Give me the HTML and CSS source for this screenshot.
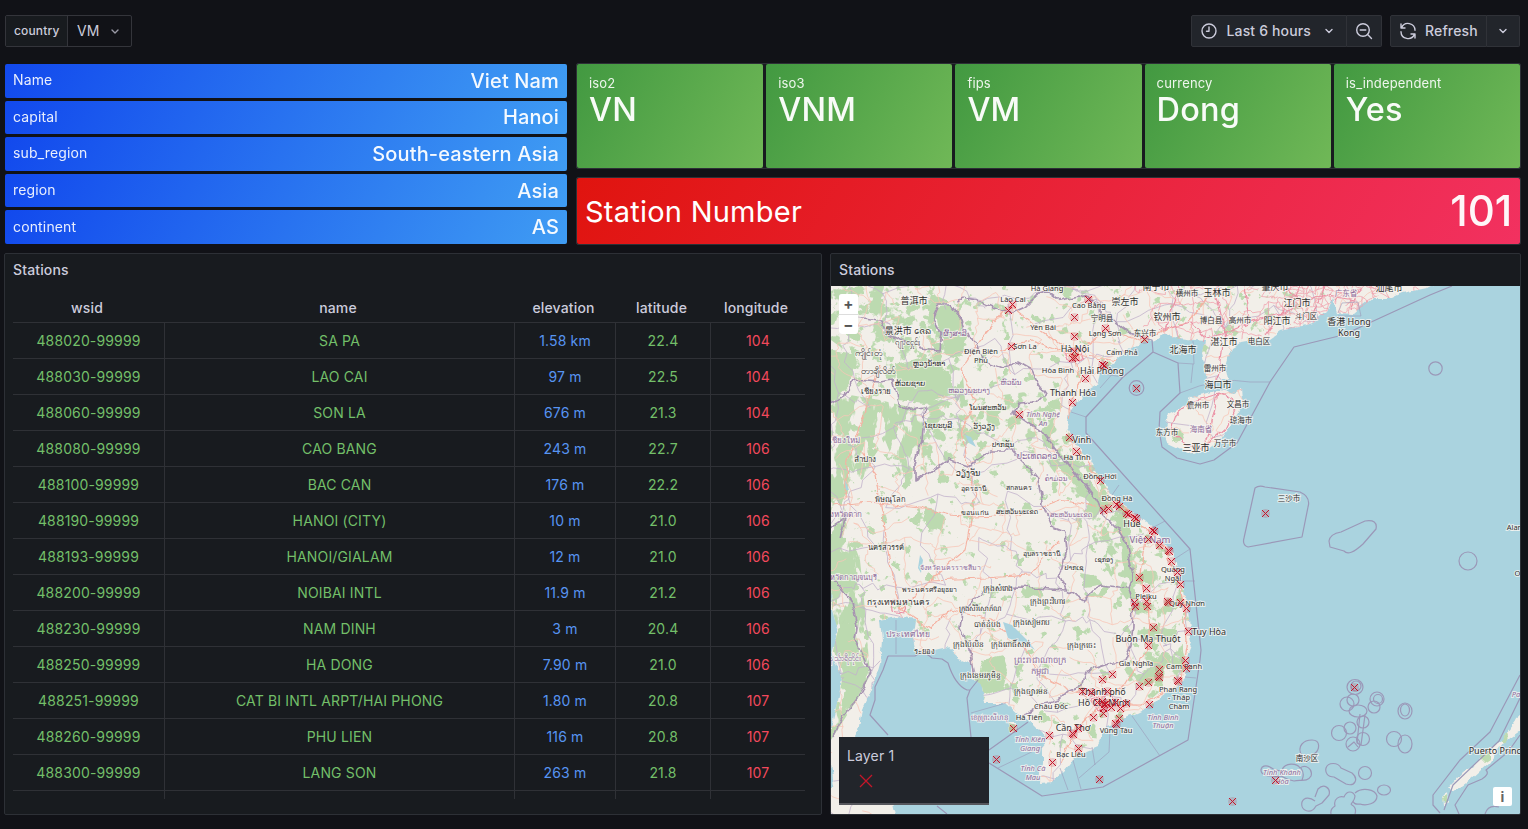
FILE: index.html
```html
<!DOCTYPE html>
<html lang="en">
<head>
<meta charset="utf-8">
<title>Stations</title>
<link rel="stylesheet" href="styles.css">
</head>
<body>
<header class="toolbar">
  <div class="variable">
    <span class="variable-label">country</span>
    <span class="variable-value"><span>VM</span><svg class="chevron dim" viewBox="0 0 16 16"><path d="M5 7 8 10l3-3"/></svg></span>
  </div>
  <div class="actions">
    <div class="button-group">
      <button class="btn time"><svg class="icon" viewBox="0 0 18 18"><circle cx="9" cy="9" r="7"/><path d="M9 5v4.300H6.500"/></svg><span>Last 6 hours</span><svg class="chevron" viewBox="0 0 16 16"><path d="M5 6.500 8 9.500 11 6.500"/></svg></button>
      <button class="btn zoom"><svg class="icon" viewBox="0 0 18 18"><circle cx="8" cy="8" r="6.300"/><path d="M12.600 12.600 16.500 16.500M5.200 8h5.600"/></svg></button>
    </div>
    <div class="button-group">
      <button class="btn refresh"><svg class="icon" viewBox="0 0 18 18"><path d="M2 2v4h4M2.600 5.600A7 7 0 0 1 16 8.300M16 16v-4h-4M15.400 12.400A7 7 0 0 1 2 9.700"/></svg><span>Refresh</span></button>
      <button class="btn interval"><svg class="chevron" viewBox="0 0 16 16"><path d="M5 6.500 8 9.500 11 6.500"/></svg></button>
    </div>
  </div>
</header>
<main class="dashboard">
  <section class="summary">
    <div class="facts">
      <div class="fact"><span>Name</span><b>Viet Nam</b></div>
      <div class="fact"><span>capital</span><b>Hanoi</b></div>
      <div class="fact"><span>sub_region</span><b>South-eastern Asia</b></div>
      <div class="fact"><span>region</span><b>Asia</b></div>
      <div class="fact"><span>continent</span><b>AS</b></div>
    </div>
    <div class="stats">
      <div class="codes">
        <div class="code"><span>iso2</span><b>VN</b></div>
        <div class="code"><span>iso3</span><b>VNM</b></div>
        <div class="code"><span>fips</span><b>VM</b></div>
        <div class="code"><span>currency</span><b>Dong</b></div>
        <div class="code"><span>is_independent</span><b>Yes</b></div>
      </div>
      <div class="count"><div class="count-fill"><span>Station Number</span><b>101</b></div></div>
    </div>
  </section>
  <section class="details">
    <div class="panel table-panel">
      <h2>Stations</h2>
      <div class="table">
        <div class="row head"><span>wsid</span><span>name</span><span>elevation</span><span>latitude</span><span>longitude</span></div>
        <div class="table-body" id="rows"></div>
      </div>
    </div>
    <div class="panel map-panel">
      <h2>Stations</h2>
      <div class="map">
        <svg class="map-canvas" viewBox="831 286 689 528">
          <defs>
            <filter id="rough" x="-5%" y="-5%" width="110%" height="110%"><feTurbulence type="fractalNoise" baseFrequency=".09" numOctaves="3" seed="4"/><feDisplacementMap in="SourceGraphic" scale="7" xChannelSelector="R" yChannelSelector="G"/></filter>
            <filter id="wood" x="-5%" y="-5%" width="110%" height="110%"><feTurbulence type="fractalNoise" baseFrequency=".08 .04" numOctaves="4" seed="9" result="n"/><feColorMatrix in="n" type="matrix" values="0 0 0 0 0  0 0 0 0 0  0 0 0 0 0  16 0 0 0 -6.900" result="m"/><feComposite in="SourceGraphic" in2="m" operator="in"/></filter>
            <filter id="patchy" x="-5%" y="-5%" width="110%" height="110%"><feTurbulence type="fractalNoise" baseFrequency=".07" numOctaves="4" seed="13" result="n"/><feColorMatrix in="n" type="matrix" values="0 0 0 0 0  0 0 0 0 0  0 0 0 0 0  16 0 0 0 -8.300" result="m"/><feComposite in="SourceGraphic" in2="m" operator="in"/></filter>
            <filter id="sparse" x="-5%" y="-5%" width="110%" height="110%"><feTurbulence type="fractalNoise" baseFrequency=".08" numOctaves="4" seed="21" result="n"/><feColorMatrix in="n" type="matrix" values="0 0 0 0 0  0 0 0 0 0  0 0 0 0 0  18 0 0 0 -11.600" result="m"/><feComposite in="SourceGraphic" in2="m" operator="in"/></filter>
            <clipPath id="landClip"><use href="#mainland"/><use href="#hainan"/></clipPath>
            <clipPath id="chinaClip"><path d="M1130 280H1450L1400 300 1340 325 1200 345 1160 335 1140 325Z"/></clipPath>
            <clipPath id="deltaClip"><path d="M1262 280H1400L1372 300 1350 325 1290 325 1275 305Z"/></clipPath>
          </defs>
          <g class="land" filter="url(#rough)">
            <path id="mainland" d="M820 276H1450L1427 288 1403 293 1393 298 1373 298 1360 308 1353 314 1338 313 1333 298 1327 312 1313 323 1297 327 1280 331 1270 338 1257 340 1240 343 1233 347 1228 360 1225 370 1227 380 1207 380 1205 370 1202 353 1204 342 1187 340 1173 338 1163 333 1155 340 1143 342 1133 347 1120 357 1110 365 1100 373 1098 383 1083 392 1077 403 1070 413 1067 427 1072 440 1080 450 1090 460 1100 478 1110 493 1123 505 1137 515 1150 525 1157 532 1163 543 1172 552 1177 567 1182 580 1186 597 1188 610 1190 630 1192 643 1188 653 1187 667 1183 680 1175 688 1163 695 1153 705 1137 713 1127 717 1115 725 1104 728 1102 737 1097 747 1083 753 1073 760 1065 770 1052 782 1040 783 1042 763 1042 747 1048 740 1042 733 1032 723 1022 717 1007 703 985 703 982 687 972 677 972 663 958 657 948 648 925 653 915 648 912 633 914 620 898 617 880 620 882 640 880 663 875 680 868 697 862 710 858 730 852 742 848 775 865 795 893 803 898 824H820V790L834 786 828 740 838 700 842 680 832 655 838 630 832 610Z"/>
            <path id="hainan" d="M1168 415 1187 405 1190 397 1207 393 1220 390 1232 393 1242 388 1243 403 1237 413 1227 430 1220 440 1207 450 1195 455 1183 450 1168 443 1165 427Z"/>
            <path d="M1524 706 1517 720 1507 733 1493 747 1477 763 1462 772 1450 787 1453 792 1470 780 1490 762 1503 743 1524 728ZM1443 797l3-3 1 8-3 4ZM1008 722l8 1 1 9-6 2Z"/>
          </g>
          <g class="forest"><path filter="url(#rough)" d="M1482 756 1490 750 1490 758 1484 762ZM1501 738l6-5 2 6-5 4ZM1009 724l7 2-1 6-5-1ZM1443 798l3-2 0 6-2 1Z"/></g>
          <g clip-path="url(#landClip)">
            <g class="forest">
              <path filter="url(#wood)" d="M820 400 850 395 880 400 900 405 925 410 922 440 915 478 905 490 885 440 875 455 862 480 850 470 845 520 860 560 865 610 870 675 860 695 831 740 820 700Z"/>
              <path filter="url(#rough)" d="M828 350 855 355 850 385 828 405ZM895 365 925 358 950 372 955 395 925 403 898 400ZM935 308 952 305 962 320 967 338 960 358 945 355 942 333ZM833 545 855 560 858 590 845 592 831 575ZM842 620 854 627 858 655 868 672 856 700 840 715 845 680 833 650ZM926 508 935 510 945 520 943 530 928 532 922 520ZM983 660 1003 655 1008 670 1003 690 985 695 975 680ZM1050 458 1070 465 1088 480 1110 505 1102 512 1080 490ZM1120 520 1130 530 1133 560 1138 580 1130 588 1122 560ZM1080 572 1095 575 1102 585 1086 588ZM1150 665 1163 652 1172 655 1160 680 1145 687 1138 680ZM1050 287 1075 286 1070 300ZM925 289 950 302 940 306ZM1172 433 1180 430 1184 438 1176 443ZM1012 683l6 0 0 20-5-4Z"/>
              <path filter="url(#patchy)" d="M831 286H930L960 340 965 400 1040 390 1100 470 1145 530 1170 555 1183 600 1183 650 1185 670 1150 700 1130 670 1140 620 1110 575 1075 500 1045 460 1000 440 945 462 920 475 925 410 831 340ZM970 586 1060 588 1050 598 985 598Z"/>
              <path filter="url(#sparse)" d="M831 286H1340L1240 345 1090 400 1070 430 1100 470 1190 600 1190 690 1060 760 960 690 880 620 831 740Z"/>
            </g>
            <g class="provinces" id="provinces"></g>
            <g class="roads" id="roads"></g>
            <g class="roads dense" clip-path="url(#chinaClip)" id="chinaRoads"></g>
            <g class="roads dense" clip-path="url(#deltaClip)" id="deltaRoads"></g>
            <g class="highways">
              <path d="M861 450 875 475 884 520 887 545 892 575 900 610 930 580 965 550 972 515 975 490 965 455 962 430 975 400 960 370 980 340 1010 305M831 505 870 502 920 508 950 515 975 517 1020 515 1060 500 1105 508M930 580 985 578 1030 575 1046 555 1060 540M898 608 930 630 950 610 990 620 1020 640 1040 675M1075 355 1080 380 1070 410 1072 440 1100 480 1135 518 1165 548 1182 590 1187 640 1180 685 1140 705 1100 705M1100 705 1075 730 1060 765M1075 355 1040 330 1010 305M1075 355 1105 330 1140 340 1190 320 1215 290M1075 355 1120 360M1000 350 1030 340 1075 355M1145 540 1140 575 1147 605 1150 645 1125 685 1100 705M1040 675 1070 690 1100 705M845 500 847 460 866 410 880 365"/>
              <path class="major" d="M1160 330 1190 322 1205 338 1220 335 1250 322 1290 310 1320 295 1355 300M1215 286 1220 310 1225 340M1180 286 1165 330M1245 286 1250 320M1285 286 1300 300M1222 342 1218 380M1175 415 1190 402 1218 394 1238 402 1226 428 1203 448 1185 445 1170 430ZM1218 394 1210 430 1203 448M1325 286 1312 320M1340 286 1335 300M1360 287 1350 310M1300 286 1265 335M892 600l14 3-3 10-10-2ZM1065 350l14-3 4 12-15 3ZM1092 698l16-5 8 12-18 6Z"/>
            </g>
            <path class="water" d="M1003 622 1012 625 1028 641 1035 650 1027 645 1008 638ZM965 435l6 2 5 10-7-4ZM845 480l4 10-3 0ZM920 555l3 5-2 13-3-5Z"/>
          </g>
          <g class="borders">
            <path d="M855 317 880 320 885 333 900 340 920 348 940 350 942 333 933 317 938 305 952 305 962 320 968 337 977 343 982 360 1002 368 1018 362 1032 370 1038 383 1045 393 1036 402 1018 403 1012 413 1025 420 1042 432 1052 445 1062 458 1075 475 1087 487 1097 500 1103 515 1118 530 1128 545 1130 560 1133 575 1128 588 1132 600 1133 625 1131 645 1125 660 1105 665 1085 672 1082 685 1070 690 1060 700 1040 705 1022 717M957 303 962 297 977 300 992 307 1012 313 1025 307 1035 297 1047 290 1060 300 1080 296 1100 303 1100 315 1115 322 1130 333 1143 338M831 403 845 395 855 380 880 382 892 380 898 403 905 410 925 407 922 440 915 465 915 480 928 473 948 460 968 467 992 450 1012 450 1025 463 1038 480 1042 503 1052 527 1065 532 1067 550 1060 575 1066 590 1085 600 1100 585 1128 588M1066 590 1018 587 982 590 962 613 960 627 970 650 975 675M831 527 845 518 840 540M831 577 852 600 857 627 855 640 870 673 862 693 842 717 833 737"/>
          </g>
          <g class="maritime">
            <path d="M1143 338 1152 340 1153 352 1140 363 1123 377 1086 417 1086 433 1190 549 1201 650 1200 660 1188 740 1103 787 1042 796 989 763M989 750 1028 722M1153 352 1178 363 1180 393 1160 412 1159 430 1162 447 1177 458 1200 464 1214 460 1237 443 1270 382 1294 347 1343 335 1430 295 1452 286M888 656H915Q923 650 932 658L942 659 948 663Q955 685 967 690L970 690 978 680M970 690 967 698 971 737M888 656 883 670 875 687V700L870 715 888 735M937 806 947 814M1255 488Q1259 485 1265 487L1300 492Q1311 497 1308 507L1302 537 1248 547Q1242 545 1244 538ZM1329 541Q1330 534 1341 532L1365 521Q1378 519 1376 529L1363 544Q1349 557 1344 551L1330 547ZM1520 675 1490 732 1460 760 1433 795V805L1440 813M1524 690 1499 741 1453 785 1444 810M1485 814Q1488 804 1499 807M1520 735 1508 752 1486 770Q1490 774 1482 779L1468 785 1455 805 1459 814"/>
            <circle cx="1136.500" cy="388" r="7.300"/><circle cx="1435.500" cy="368.500" r="6.700"/><circle cx="1468" cy="561" r="9"/>
            <ellipse cx="1355" cy="687" rx="8" ry="7.500"/><circle cx="1356" cy="686" r="5"/><circle cx="1353" cy="700" r="6"/><circle cx="1347" cy="704" r="7"/><ellipse cx="1358" cy="711" rx="9" ry="6"/><ellipse cx="1377" cy="699" rx="7" ry="7"/><circle cx="1378" cy="699" r="4.500"/><circle cx="1374" cy="707" r="6"/><ellipse cx="1405" cy="711" rx="7" ry="8"/><ellipse cx="1405" cy="710" rx="4.500" ry="6"/><circle cx="1363" cy="722" r="6"/><circle cx="1339" cy="733" r="7.500"/><circle cx="1350" cy="728" r="6"/><circle cx="1353" cy="744" r="7"/><circle cx="1363" cy="739" r="6.500"/><path d="M1360 714 1357 743 1361 745 1365 715M1348 747 1354 742 1358 747"/><circle cx="1394" cy="739" r="7.500"/><ellipse cx="1405" cy="744" rx="7" ry="9"/>
            <path d="M1302 756C1296 746 1304 740 1312 740C1321 740 1320 750 1314 754L1306 761Q1300 762 1302 756"/>
            <path d="M1281 776C1276 778 1272 775 1268 776C1257 775 1260 762 1270 767Q1276 772 1282 770C1285 762 1297 763 1300 768C1306 764 1313 769 1311 776C1307 783 1300 779 1294 781Q1288 780 1281 776M1301 768Q1305 774 1302 780"/>
            <path d="M1326 768C1328 762 1338 762 1341 768L1352 773C1359 779 1355 787 1346 784L1334 777C1327 777 1325 772 1326 768ZM1315 797 1318 789C1324 783 1331 788 1329 795L1322 803 1316 806C1311 815 1300 811 1302 802C1304 797 1310 797 1315 801M1331 814Q1330 809 1335 806C1333 798 1340 796 1344 797C1347 790 1353 791 1355 796C1355 802 1349 804 1352 805Q1357 808 1355 814M1355 793C1362 787 1375 789 1377 796C1377 804 1366 806 1360 804Q1354 805 1353 801"/>
            <circle cx="1365" cy="773" r="6.500"/><ellipse cx="1384" cy="790" rx="6.500" ry="5"/>
            <path class="thin" d="M1086 417 1071 412M1190 549 1173 560M1119 485 1112 495M1165 521 1152 528M1180 393Q1220 376 1250 382L1270 382M1178 363 1194 364 1193 341M1193 364 1191 383M1103 330V335M1338 313 1342 303 1358 302 1361 316 1338 316M1115 371 1100 388M1098 373 1123 377M1188 628 1200 629M1185 677 1196 678M1132 716 1160 756M1110 731 1109 752 1079 778M1092 747 1095 765M1073 760 1081 789M1060 768 1068 790M971 713 1006 703M998 768 1042 747M896 620V654M1123 377 1103 362M1184 581 1195 581"/>
          </g>
          <g id="labels"></g>
          <g id="markers"></g>
        </svg>
        <div class="map-zoom"><button>+</button><button>−</button></div>
        <div class="legend"><span>Layer 1</span><svg viewBox="0 0 14 14"><path d="M1 1 13 13M13 1 1 13"/></svg></div>
        <button class="attribution">i</button>
      </div>
    </div>
  </section>
</main>
<script src="app.js"></script>
</body>
</html>
```

FILE: styles.css
```css
* { box-sizing: border-box; }
body { margin: 0; height: 829px; overflow: hidden; background: #111217; color: #ccccdc; font-family: Inter, "Liberation Sans", sans-serif; font-size: 14px; letter-spacing: .15px; }
button { font: inherit; letter-spacing: inherit; color: inherit; }
svg { display: block; }

.toolbar { display: flex; justify-content: space-between; padding: 15px 8px 0 5px; height: 63px; }
.variable { display: flex; height: 32px; width: 127px; border: 1px solid #34353b; border-radius: 2px; }
.variable-label { width: 62px; background: #181b1f; border-right: 1px solid #34353b; padding-left: 8px; line-height: 30px; font-size: 12px; font-weight: 500; }
.variable-value { flex: 1; display: flex; align-items: center; justify-content: space-between; padding: 0 8px 0 9px; }
.variable-value span { padding-bottom: 2px; }
.chevron { width: 16px; height: 16px; fill: none; stroke: #ccccdc; stroke-width: 1.4; stroke-linecap: round; stroke-linejoin: round; }
.chevron.dim { stroke: #9a9aa6; }
.actions { display: flex; gap: 8px; }
.button-group { display: flex; height: 32px; }
.btn { display: flex; align-items: center; height: 32px; background: #22252b; border: 1px solid #303238; padding: 0; font-weight: 500; }
.btn span { padding-bottom: 2px; }
.btn + .btn { border-left: 0; }
.btn:first-child { border-radius: 2px 0 0 2px; }
.btn:last-child { border-radius: 0 2px 2px 0; }
.icon { width: 18px; height: 18px; fill: none; stroke: #ccccdc; stroke-width: 1.4; stroke-linecap: round; stroke-linejoin: round; }
.time { width: 156px; padding-left: 8px; gap: 8.5px; }
.time .chevron { margin-left: 1px; }
.zoom { width: 35px; justify-content: center; }
.refresh { width: 97px; padding-left: 8px; gap: 8px; }
.interval { width: 33px; justify-content: center; }

.dashboard { display: flex; flex-direction: column; gap: 8px; padding: 0 7px 0 4px; }
.summary { display: flex; height: 182px; gap: 9px; }
.facts { width: 563px; padding: 1px 0 1px 1px; display: flex; flex-direction: column; gap: 3px; }
.fact { flex: 1; display: flex; align-items: center; justify-content: space-between; padding: 0 8px; border-radius: 2px; background: linear-gradient(120deg, #1249ed, #3f9cf3); color: #fff; line-height: 1; }
.fact span { opacity: .9; padding-bottom: 1px; }
.fact b { font-size: 20px; font-weight: 500; letter-spacing: .14px; opacity: .95; }
.stats { flex: 1; display: flex; flex-direction: column; gap: 8px; }
.codes, .count { border: 1px solid #2d3036; border-radius: 2px; background: #181b1f; }
.codes { display: flex; gap: 3px; height: 106px; }
.code { flex: 1; border-radius: 2px; padding: 11px 12px; background: linear-gradient(120deg, #429941, #70b857); color: #fff; display: flex; flex-direction: column; }
.code span { font-size: 13px; line-height: 16px; opacity: .9; letter-spacing: .16px; }
.code b { font-size: 32.5px; font-weight: 500; line-height: 38px; letter-spacing: .15px; opacity: .96; }
.count { height: 68px; }
.count-fill { height: 66px; padding: 0 8px; display: flex; justify-content: space-between; align-items: center; border-radius: 2px; background: linear-gradient(120deg, #e0140f, #f23160); color: #fff; }
.count-fill span { font-size: 29px; letter-spacing: .24px; }
.count-fill b { font-size: 42px; font-weight: 500; opacity: .96; letter-spacing: -.1px; padding-bottom: 1px; }

.details { display: flex; gap: 8px; height: 562px; }
.panel { background: #181b1f; border: 1px solid #2d3036; border-radius: 2px; }
.panel h2 { margin: 0; padding-left: 8px; height: 32px; line-height: 32px; font-size: 14px; font-weight: 500; }
.table-panel { width: 818px; }
.map-panel { width: 691px; overflow: hidden; }
.table { margin: 0 16px 0 8px; height: 513px; overflow: hidden; }
.row { display: grid; grid-template-columns: 152px 350px 101px 95px 94px; height: 36px; border-bottom: 1px solid #2f3136; text-align: center; line-height: 36px; }
.row.head { height: 37px; padding-top: 4px; font-weight: 500; line-height: 35px; }
.head span { padding-right: 4px; }
.table-body .row span { border-right: 1px solid #2f3136; color: #73bf69; height: 36px; }
.table-body .row span:nth-child(3) { color: #5794f2; }
.table-body .row span:nth-child(5) { color: #f2495c; border-right: 0; }

.map { position: relative; height: 528px; background: #aad3df; }
.map-canvas { width: 689px; height: 528px; }
.land { fill: #f2efe9; }
.forest { fill: #bcdab0; }
.water { fill: #aad3df; }
.provinces { fill: none; stroke: #c3b2cc; stroke-width: .8; }
.roads { fill: none; stroke: #f8c6b7; stroke-width: .8; }
.roads.dense { stroke: #f0a3ae; }
.highways { fill: none; stroke: #f5b2a2; stroke-width: 1.2; stroke-linejoin: round; filter: url(#rough); }
.highways .major { stroke: #eb93a6; }
.borders { fill: none; stroke: #a794b1; stroke-width: 1.7; stroke-linejoin: round; filter: url(#rough); }
.maritime { fill: none; stroke: #9b98b8; stroke-width: 1.2; stroke-linejoin: round; }
.maritime .thin { stroke-width: .6; }
.label { font-family: "Noto Sans", "Noto Sans CJK SC", "DejaVu Sans", sans-serif; letter-spacing: 0; fill: #303030; stroke: #f8f6f2; stroke-opacity: .75; stroke-width: 2px; paint-order: stroke; text-anchor: middle; }
.label.area { fill: #8d6b9b; }
.label.area.slanted { font-style: italic; }
.halo { fill: #c4162a; fill-opacity: .17; }
.cross { fill: none; stroke: #c4162a; stroke-width: 1; }
.map-zoom { position: absolute; left: 8px; top: 8px; width: 19px; display: flex; flex-direction: column; gap: 1px; background: #ddd; border-radius: 3px; overflow: hidden; }
.map-zoom button { height: 19.5px; border: 0; background: #fff; padding: 0; color: #555; font-size: 15px; font-weight: 700; line-height: 17px; }
.legend { position: absolute; left: 8px; top: 451px; width: 150px; height: 68px; background: #22252b; border-bottom: 2px solid #55565c; padding: 9px 8px; line-height: 20px; }
.legend svg { width: 14px; height: 14px; margin: 8px 0 0 12px; fill: none; stroke: #c4162a; stroke-width: 1.3; }
.attribution { position: absolute; right: 8px; bottom: 8px; width: 19px; height: 19px; border: 0; border-radius: 2px; background: #fff; color: #666; font-weight: 700; padding: 0; line-height: 19px; }
```

FILE: app.js
```js
const stations = [
  ["488020-99999", "SA PA", "1.58 km", "22.4", "104"],
  ["488030-99999", "LAO CAI", "97 m", "22.5", "104"],
  ["488060-99999", "SON LA", "676 m", "21.3", "104"],
  ["488080-99999", "CAO BANG", "243 m", "22.7", "106"],
  ["488100-99999", "BAC CAN", "176 m", "22.2", "106"],
  ["488190-99999", "HANOI (CITY)", "10 m", "21.0", "106"],
  ["488193-99999", "HANOI/GIALAM", "12 m", "21.0", "106"],
  ["488200-99999", "NOIBAI INTL", "11.9 m", "21.2", "106"],
  ["488230-99999", "NAM DINH", "3 m", "20.4", "106"],
  ["488250-99999", "HA DONG", "7.90 m", "21.0", "106"],
  ["488251-99999", "CAT BI INTL ARPT/HAI PHONG", "1.80 m", "20.8", "107"],
  ["488260-99999", "PHU LIEN", "116 m", "20.8", "107"],
  ["488300-99999", "LANG SON", "263 m", "21.8", "107"],
  ["", "", "", "", ""]
];
document.getElementById("rows").innerHTML = stations
  .map(r => `<div class="row">${r.map(c => `<span>${c}</span>`).join("")}</div>`).join("");

// [text, centre x, centre y, size, kind]
const labels = [
  ["普洱市", 914, 301, 9], ["景洪市 ᨩᩮᨦ", 908, 331, 9], ["ၵျႃႉငႁုင်ႈ", 908, 342, 8],
  ["ကျိုင်းတုံ", 869, 353, 9], ["တာချီလိတ်", 878, 371, 9], ["เชียงราย", 876, 391, 8],
  ["ຫ້ວຍຊາຍ", 910, 383, 7.500], ["ຫຼວງນ້ຳທາ", 929, 363, 7.500], ["ຜົ້ງສາລີ", 955, 333, 7.500, "area"],
  ["ຫລວງພະບາງ", 969, 390, 7.500, "area"], ["ຫົວພັນ", 1011, 382, 7.500, "area"], ["ໂພນສະຫວັນ", 988, 407, 7],
  ["ໄຊຍະບູລີ", 938, 425, 7.500], ["ວັງວຽງ", 984, 426, 7.500], ["Lào Cai", 1013, 299, 7.500],
  ["Hà Giang", 1047, 288, 7.500], ["Yên Bái", 1043, 327, 7.500], ["Sơn La", 1025, 346, 7.500],
  ["Điện Biên", 981, 351, 7.500], ["Phủ", 981, 360, 7.500], ["Hòa Bình", 1058, 370, 7.500],
  ["Cao Bằng", 1089, 305, 7.500], ["Lạng Sơn", 1105, 333, 7.500], ["Hà Nội", 1075, 349, 9],
  ["Cẩm Phả", 1122, 352, 7.500], ["Hải Phòng", 1102, 370.500, 9], ["Thanh Hóa", 1073, 393, 9],
  ["Tỉnh Nghệ", 1043, 414, 7.500, "area slanted"], ["An", 1043, 423, 7.500, "area slanted"],
  ["Vinh", 1082, 439.500, 9], ["Hà Tĩnh", 1077, 457, 7.500], ["Đồng Hới", 1100, 476, 7.500],
  ["Đồng Hà", 1117, 498, 7.500], ["Huế", 1132, 524, 9], ["Việt Nam", 1150, 540, 9.500, "area"],
  ["Quảng", 1173, 569, 7.500], ["Ngãi", 1173, 578, 7.500], ["Pleiku", 1146, 596, 7.500],
  ["Quy Nhơn", 1187, 603, 7.500], ["Tuy Hòa", 1209, 632, 9], ["Buôn Ma Thuột", 1148, 639, 9],
  ["Gia Nghĩa", 1136, 663, 7.500], ["Cam Ranh", 1184, 666, 7.500], ["Phan Rang", 1178, 689, 7.500],
  ["- Tháp", 1179, 697, 7.500], ["Chàm", 1179, 706, 7.500], ["Thành phố", 1103, 692, 9],
  ["Hồ Chí Minh", 1104, 703, 9], ["Vũng Tàu", 1116, 730, 7.500], ["Tỉnh Bình", 1163, 717, 7.500, "area slanted"],
  ["Thuận", 1163, 725, 7.500, "area slanted"], ["Cần Thơ", 1073, 728, 9], ["Bạc Liêu", 1071, 754, 7.500],
  ["Châu Đốc", 1051, 706, 7.500], ["Hà Tiên", 1029, 717, 7.500], ["Tỉnh Kiên", 1030, 739, 7.500, "area slanted"],
  ["Giang", 1030, 748, 7.500, "area slanted"], ["Tỉnh Cà", 1033, 768, 7.500, "area slanted"], ["Mau", 1033, 777, 7.500, "area slanted"],
  ["崇左市", 1125, 302, 9], ["宁明县", 1102, 318, 7.500], ["钦州市", 1167, 317, 9], ["东兴市", 1145, 333, 7.500],
  ["南宁市", 1156, 287, 9], ["横州市", 1187, 293, 7.500], ["玉林市", 1217, 293, 9], ["博白县", 1211, 320, 7.500],
  ["高州市", 1240, 320, 7.500], ["阳江市", 1277, 321, 9], ["湛江市", 1224, 342, 9], ["电白区", 1259, 341, 7.500],
  ["北海市", 1183, 350, 9], ["雷州市", 1215, 368, 7.500], ["海口市", 1218, 385, 9], ["儋州市", 1198, 405, 7.500],
  ["文昌市", 1238, 404, 7.500], ["琼海市", 1241, 420, 7.500], ["海南省", 1201, 429, 7.500, "area"],
  ["东方市", 1167, 432, 7.500], ["三亚市", 1196, 448, 9], ["万宁市", 1225, 443, 7.500],
  ["江门市", 1297, 303, 9], ["斗门区", 1306, 316, 7.500], ["广东省", 1346, 293, 7.500, "area"],
  ["汕尾市", 1389, 288, 9], ["肇庆市", 1275, 287, 9], ["香港 Hong", 1349, 322, 9], ["Kong", 1349, 333, 9],
  ["三沙市", 1289, 498, 7.500], ["南沙区", 1307, 758, 7.500],
  ["Tỉnh Khánh", 1282, 772, 7.500, "area slanted"], ["Hòa", 1282, 781, 7.500, "area slanted"],
  ["Puerto Princesa", 1502, 751, 9], ["Palawan", 1526, 694, 7.500, "area slanted"],
  ["Alaminos", 1523, 527, 7.500], ["Olongapo", 1532, 573, 7.500],
  ["เชียงใหม่", 844, 440, 8, "area"], ["ลำปาง", 865, 459, 8], ["พิษณุโลก", 890, 499, 7.500],
  ["จังหวัดตาก", 843, 514, 8, "area"], ["นครสวรรค์", 886, 547, 7.500], ["จังหวัดกาญจนบุรี", 849, 577, 7.500, "area"],
  ["จังหวัดนครราชสีมา", 950, 567, 7, "area"], ["พระนครศรีอยุธยา", 929, 589, 7], ["กรุงเทพมหานคร", 898, 602, 8.500],
  ["ประเทศไทย", 908, 634, 8.500, "area"], ["ระยอง", 924, 651, 7.500], ["တနင်္သာရီတိုင်း", 842, 658, 8, "area"],
  ["ວຽງຈັນ", 968, 473, 8], ["อุดรธานี", 974, 488, 7], ["ขอนแก่น", 975, 512, 7], ["สกลนคร", 1019, 487, 7],
  ["ປາກຊັນ", 1003, 444, 7], ["ປະເທດລາວ", 1037, 456, 8.500, "area"], ["ຄຳມ່ວນ", 1056, 478, 7, "area"],
  ["ສະຫວັນນະເຂດ", 1017, 512, 6.500], ["ສະຫວັນນະເຂດ", 1071, 515, 6.500, "area"], ["อุบลราชธานี", 1042, 553, 7],
  ["ເຊກອງ", 1104, 560, 6.500], ["ປາກເຊ", 1074, 568, 6.500], ["ក្រុងសំរោង", 998, 588, 7.500], ["ក្រុងសិរីសោភ័ណ", 980, 608, 7],
  ["ក្រុងព្រះវិហារ", 1047, 601, 7.500], ["បាត់ដំបង", 987, 624, 7.500], ["ក្រុងសៀមរាប", 1031, 622, 7.500],
  ["ក្រុងប៉ៃលិន", 968, 644, 7.500], ["ក្រុងពោធិ៍សាត់", 1011, 644, 7.500], ["ព្រះរាជាណាចក្រ", 1040, 660, 8.500, "area"],
  ["កម្ពុជា", 1040, 671, 8.500, "area"], ["ក្រុងខេមរភូមិន្ទ", 980, 675, 7.500], ["ក្រុងច្បារមន", 1031, 691, 7.500],
  ["ខេត្តព្រះសីហនុ", 989, 717, 7, "area"], ["ក្រុងក្រចេះ", 1081, 645, 7.500]
];
document.getElementById("labels").innerHTML = labels
  .map(([t, x, y, s, k = ""]) => `<text class="label ${k}" x="${x}" y="${y + s * .36}" font-size="${s}">${t}</text>`).join("");

const points = [[1012,304],[1008,310],[1011,346],[1019,414],[1088,299],[1074,317],[1105,328],[1074,336],[1144,339],[1074,351],[1072,358],[1075,357],[1102,364],[1104,365],[1085,378],[1136,388],[1072,402],[1069,437],[1076,451],[1100,480],[1108,508],[1103,510],[1116,504],[1119,506],[1126,513],[1128,514],[1134,517],[1136,518],[1152,530],[1154,531],[1148,539],[1159,545],[1168,550],[1169,551],[1171,561],[1177,572],[1180,584],[1139,577],[1146,588],[1134,602],[1135,606],[1146,601],[1147,606],[1167,601],[1168,602],[1180,602],[1186,608],[1153,627],[1188,631],[1148,645],[1265,513],[1185,660],[1186,668],[1159,669],[1158,676],[1159,677],[1148,682],[1139,686],[1177,680],[1178,681],[1112,674],[1102,679],[1082,691],[1091,692],[1107,691],[1097,702],[1102,701],[1104,704],[1106,703],[1103,708],[1111,707],[1115,702],[1126,703],[1120,708],[1149,704],[1103,713],[1093,717],[1119,718],[1115,723],[1116,724],[1072,733],[1073,734],[1078,728],[1078,748],[1099,779],[1232,801],[1275,780],[1354,687],[1013,728],[996,759],[1049,735],[1052,762]];
document.getElementById("markers").innerHTML = points
  .map(([x, y]) => `<circle class="halo" cx="${x + .5}" cy="${y + .5}" r="4.500"/><path class="cross" d="M${x - 3} ${y - 3}l7 7m0-7l-7 7"/>`).join("");

// Jittered grid whose neighbouring nodes are joined into a minor line network.
function network(step, seed, keep, left, right, bottom) {
  let s = seed;
  const rand = () => (s = (s * 16807) % 2147483647) / 2147483647;
  const grid = [];
  for (let y = 280; y < bottom; y += step) {
    const line = [];
    for (let x = left; x < right; x += step) line.push([x + (rand() - .5) * step, y + (rand() - .5) * step]);
    grid.push(line);
  }
  const wiggle = (a, b) => {
    const pts = [a];
    for (let i = 1; i < 5; i++) pts.push([a[0] + (b[0] - a[0]) * i / 5 + (rand() - .5) * step * .2, a[1] + (b[1] - a[1]) * i / 5 + (rand() - .5) * step * .2]);
    pts.push(b);
    return "M" + pts.map(p => p[0].toFixed(1) + " " + p[1].toFixed(1)).join("L");
  };
  let d = "";
  grid.forEach((line, j) => line.forEach((p, i) => {
    if (line[i + 1] && rand() < keep) d += wiggle(p, line[i + 1]);
    if (grid[j + 1] && rand() < keep) d += wiggle(p, grid[j + 1][i]);
  }));
  return `<path d="${d}"/>`;
}
document.getElementById("provinces").innerHTML = network(38, 77, .75, 825, 1330, 820);
document.getElementById("roads").innerHTML = network(19, 1234, .42, 825, 1460, 820);
document.getElementById("chinaRoads").innerHTML = network(13, 555, .6, 1125, 1460, 350);
document.getElementById("deltaRoads").innerHTML = network(6, 99, .7, 1260, 1405, 330);
```
